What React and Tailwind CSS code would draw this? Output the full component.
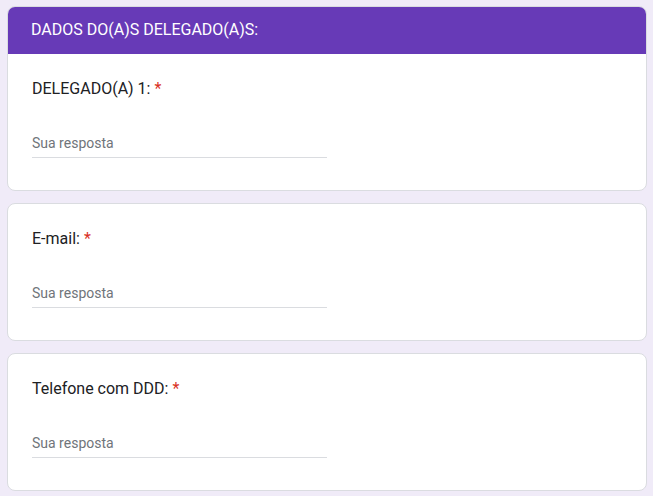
import * as React from "react";

const questions = ["DELEGADO(A) 1:", "E-mail:", "Telefone com DDD:"];

const Question = ({ label }) => (
  <div>
    <div className="text-[16px] leading-6 text-[#202124]">
      {label} <span className="text-[#d93025]">*</span>
    </div>
    <div className="mt-8 w-[295px] border-b border-[#dadce0] pb-1 text-[14px] leading-5 text-[#70757a]">
      Sua resposta
    </div>
  </div>
);

const App = () => {
  return (
    <div
      className="min-h-screen bg-[#f0ebf8] pl-[7px] pt-[6px]"
      style={{ fontFamily: "Roboto, Arial, sans-serif" }}
    >
      <div className="flex w-[640px] flex-col gap-3">
        <div className="overflow-hidden rounded-lg border border-[#dadce0] bg-white">
          <div className="flex h-12 items-center bg-[#673ab7] px-6 -mx-px -mt-px">
            <span className="text-[16px] text-white">
              DADOS DO(A)S DELEGADO(A)S:
            </span>
          </div>
          <div className="px-6 pt-[23px] pb-8">
            <Question label={questions[0]} />
          </div>
        </div>
        {questions.slice(1).map((q) => (
          <div
            key={q}
            className="rounded-lg border border-[#dadce0] bg-white px-6 pt-[23px] pb-8"
          >
            <Question label={q} />
          </div>
        ))}
      </div>
    </div>
  );
};

export default App;
